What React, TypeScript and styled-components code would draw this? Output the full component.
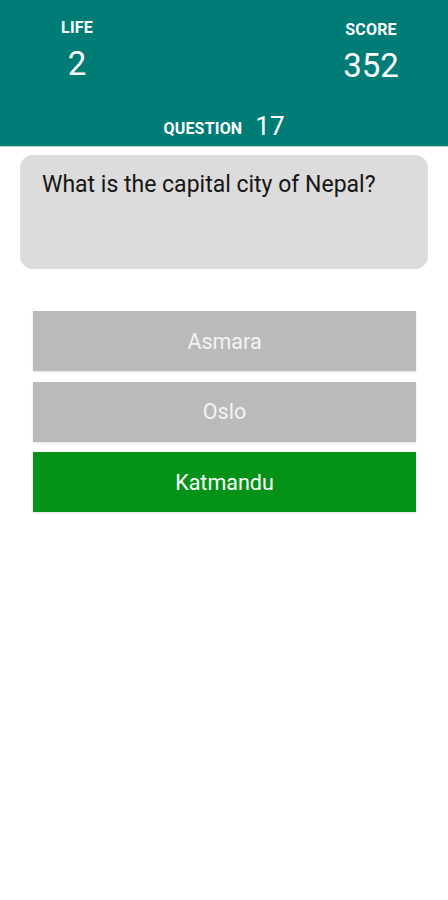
import React from "react";
import styled, { createGlobalStyle } from "styled-components";

const GlobalStyle = createGlobalStyle`
  html, body {
    margin: 0;
    padding: 0;
    background: #ffffff;
  }
  body {
    font-family: Roboto, "Noto Sans", "Liberation Sans", sans-serif;
    -webkit-font-smoothing: antialiased;
  }
  * { box-sizing: border-box; }
`;

const Screen = styled.div`
  width: 448px;
  min-height: 900px;
  background: #ffffff;
  display: flex;
  flex-direction: column;
`;

const Header = styled.header`
  height: 147px;
  background: #007c77;
  border-bottom: 1px solid #b9d6d4;
  display: flex;
  flex-direction: column;
  color: #ffffff;
  padding-top: 20px;
`;

const StatsRow = styled.div`
  display: flex;
  justify-content: space-between;
`;

const Stat = styled.div<{ $offset?: number }>`
  width: 154px;
  display: flex;
  flex-direction: column;
  align-items: center;
  gap: 11px;
  padding-top: ${(p) => p.$offset ?? 0}px;
`;

const Label = styled.span`
  font-size: 16px;
  line-height: 16px;
  font-weight: 700;
  letter-spacing: 0.2px;
`;

const BigValue = styled.span`
  font-size: 33px;
  line-height: 33px;
  font-weight: 400;
`;

const QuestionRow = styled.div`
  display: flex;
  justify-content: center;
  align-items: baseline;
  gap: 13px;
  margin-top: 30px;
`;

const QuestionValue = styled.span`
  font-size: 26px;
  line-height: 26px;
  font-weight: 400;
  position: relative;
  top: 1px;
`;

const Card = styled.div`
  margin: 8px 20px 0;
  height: 114px;
  background: #dcdcdc;
  border-radius: 13px;
  padding: 18px 22px;
  font-size: 23px;
  line-height: 23px;
  color: #161616;
`;

const Answers = styled.div`
  margin: 42px 32px 0 33px;
  display: flex;
  flex-direction: column;
  gap: 10.5px;
`;

const Answer = styled.button<{ $correct?: boolean }>`
  height: 60px;
  width: 100%;
  border: none;
  border-radius: 0;
  background: ${(p) => (p.$correct ? "#049318" : "#bababa")};
  color: ${(p) => (p.$correct ? "#ffffff" : "#f4f4f4")};
  font-family: Roboto, "Noto Sans", "Liberation Sans", sans-serif;
  font-size: 21.5px;
  font-weight: 400;
  display: flex;
  align-items: center;
  justify-content: center;
  box-shadow: 0 1px 2px rgba(0, 0, 0, 0.12);
  cursor: pointer;
`;

const answers = [
  { text: "Asmara", correct: false },
  { text: "Oslo", correct: false },
  { text: "Katmandu", correct: true },
];

export default function App() {
  return (
    <>
      <GlobalStyle />
      <Screen>
        <Header>
          <StatsRow>
            <Stat>
              <Label>LIFE</Label>
              <BigValue>2</BigValue>
            </Stat>
            <Stat $offset={2}>
              <Label>SCORE</Label>
              <BigValue>352</BigValue>
            </Stat>
          </StatsRow>
          <QuestionRow>
            <Label>QUESTION</Label>
            <QuestionValue>17</QuestionValue>
          </QuestionRow>
        </Header>
        <Card>What is the capital city of Nepal?</Card>
        <Answers>
          {answers.map((a) => (
            <Answer key={a.text} $correct={a.correct}>
              {a.text}
            </Answer>
          ))}
        </Answers>
      </Screen>
    </>
  );
}
